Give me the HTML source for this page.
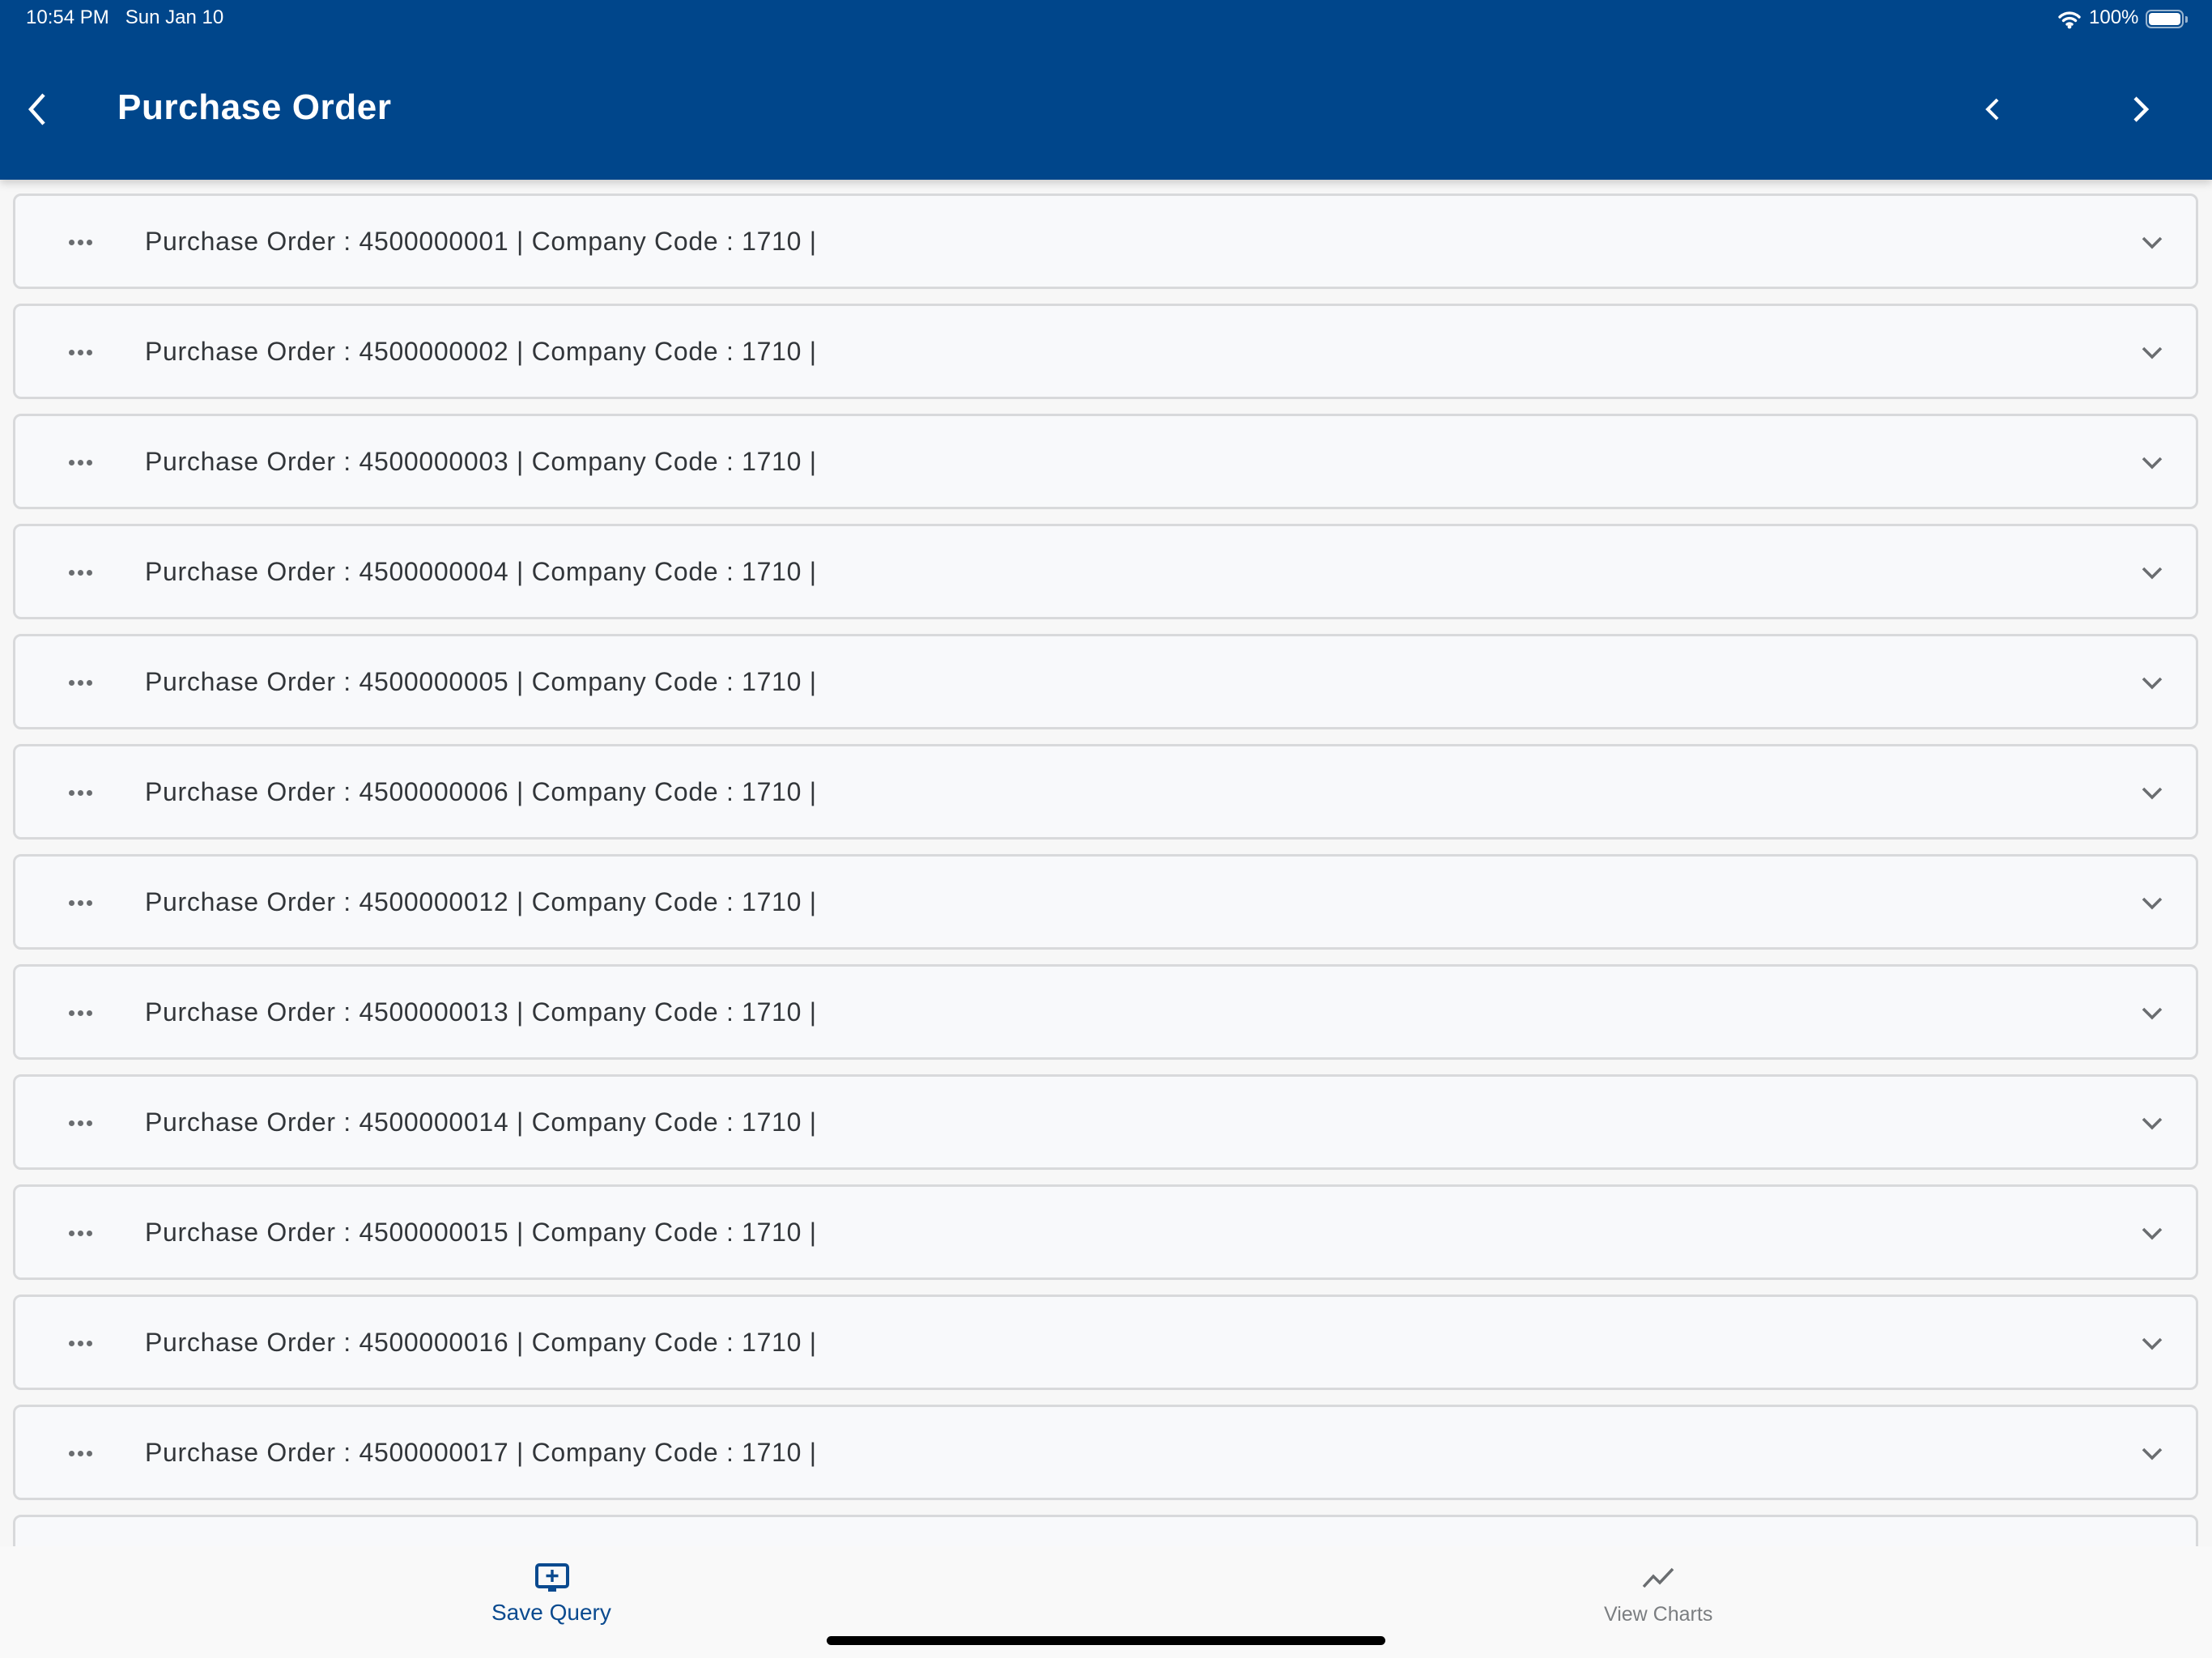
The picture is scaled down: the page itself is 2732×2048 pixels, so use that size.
<!DOCTYPE html>
<html><head><meta charset="utf-8"><style>
*{margin:0;padding:0;box-sizing:border-box}
body{width:2732px;height:2048px;background:#f7f7f7;font-family:"Liberation Sans",sans-serif;position:relative;overflow:hidden}
.hdr{position:absolute;left:0;top:0;width:2732px;height:222px;background:#00468b;box-shadow:0 4px 10px rgba(0,0,0,.18);z-index:2}
.st{position:absolute;top:8px;color:#fff;font-size:24px}
.title{position:absolute;left:145px;top:108px;color:#fff;font-size:44px;font-weight:bold;letter-spacing:0.6px}
.card{position:absolute;left:16px;width:2699px;height:118px;background:#f8f9fb;border:3px solid #d8d9db;border-radius:10px}
.card .t{position:absolute;left:160px;top:38px;font-size:32px;color:#32363a;letter-spacing:.7px}
.card .d{position:absolute;left:66px;top:48px}
.card .d i{display:inline-block;width:7px;height:7px;border-radius:50%;background:#6a6d70;margin-right:4px}
.card svg.c{position:absolute;left:2624px;top:48px}
.bot{position:absolute;left:0;top:1910px;width:2732px;height:138px;background:#f9f9f9;z-index:3}
</style></head><body>
<div class="hdr">
<div class="st" style="left:32px">10:54 PM&nbsp;&nbsp;&nbsp;Sun Jan 10</div>
<svg style="position:absolute;left:2541px;top:12px" width="30" height="24" viewBox="0 0 30 24"><path d="M3 9a17 17 0 0 1 24 0M7.5 13.5a11 11 0 0 1 15 0M12 18a5 5 0 0 1 6 0" stroke="#fff" stroke-width="3.4" fill="none" stroke-linecap="round"/><circle cx="15" cy="21" r="2.4" fill="#fff"/></svg>
<div class="st" style="left:2580px">100%</div>
<div style="position:absolute;left:2650px;top:12px;width:47px;height:23px;border:2px solid rgba(255,255,255,.6);border-radius:7px;padding:2px"><div style="width:100%;height:100%;background:#fff;border-radius:4px"></div></div>
<div style="position:absolute;left:2699px;top:20px;width:3px;height:8px;background:rgba(255,255,255,.6);border-radius:0 2px 2px 0"></div>
<svg style="position:absolute;left:30px;top:114px" width="30" height="42" viewBox="0 0 30 42"><path d="M24 3L8 21l16 18" stroke="#fff" stroke-width="4.5" fill="none"/></svg>
<div class="title">Purchase Order</div>
<svg style="position:absolute;left:2450px;top:120px" width="22" height="30" viewBox="0 0 22 30"><path d="M17 3L5 15l12 12" stroke="#fff" stroke-width="4" fill="none"/></svg>
<svg style="position:absolute;left:2632px;top:118px" width="24" height="34" viewBox="0 0 24 34"><path d="M5 3l14 14L5 31" stroke="#fff" stroke-width="4.5" fill="none"/></svg>
</div>

<div class="card" style="top:239px"><div class="d"><i></i><i></i><i></i></div><div class="t">Purchase Order : 4500000001 | Company Code : 1710 |</div><svg class="c" width="30" height="20" viewBox="0 0 30 20"><path d="M4 4l11 11L26 4" stroke="#6a6d70" stroke-width="3.6" fill="none"/></svg></div>
<div class="card" style="top:375px"><div class="d"><i></i><i></i><i></i></div><div class="t">Purchase Order : 4500000002 | Company Code : 1710 |</div><svg class="c" width="30" height="20" viewBox="0 0 30 20"><path d="M4 4l11 11L26 4" stroke="#6a6d70" stroke-width="3.6" fill="none"/></svg></div>
<div class="card" style="top:511px"><div class="d"><i></i><i></i><i></i></div><div class="t">Purchase Order : 4500000003 | Company Code : 1710 |</div><svg class="c" width="30" height="20" viewBox="0 0 30 20"><path d="M4 4l11 11L26 4" stroke="#6a6d70" stroke-width="3.6" fill="none"/></svg></div>
<div class="card" style="top:647px"><div class="d"><i></i><i></i><i></i></div><div class="t">Purchase Order : 4500000004 | Company Code : 1710 |</div><svg class="c" width="30" height="20" viewBox="0 0 30 20"><path d="M4 4l11 11L26 4" stroke="#6a6d70" stroke-width="3.6" fill="none"/></svg></div>
<div class="card" style="top:783px"><div class="d"><i></i><i></i><i></i></div><div class="t">Purchase Order : 4500000005 | Company Code : 1710 |</div><svg class="c" width="30" height="20" viewBox="0 0 30 20"><path d="M4 4l11 11L26 4" stroke="#6a6d70" stroke-width="3.6" fill="none"/></svg></div>
<div class="card" style="top:919px"><div class="d"><i></i><i></i><i></i></div><div class="t">Purchase Order : 4500000006 | Company Code : 1710 |</div><svg class="c" width="30" height="20" viewBox="0 0 30 20"><path d="M4 4l11 11L26 4" stroke="#6a6d70" stroke-width="3.6" fill="none"/></svg></div>
<div class="card" style="top:1055px"><div class="d"><i></i><i></i><i></i></div><div class="t">Purchase Order : 4500000012 | Company Code : 1710 |</div><svg class="c" width="30" height="20" viewBox="0 0 30 20"><path d="M4 4l11 11L26 4" stroke="#6a6d70" stroke-width="3.6" fill="none"/></svg></div>
<div class="card" style="top:1191px"><div class="d"><i></i><i></i><i></i></div><div class="t">Purchase Order : 4500000013 | Company Code : 1710 |</div><svg class="c" width="30" height="20" viewBox="0 0 30 20"><path d="M4 4l11 11L26 4" stroke="#6a6d70" stroke-width="3.6" fill="none"/></svg></div>
<div class="card" style="top:1327px"><div class="d"><i></i><i></i><i></i></div><div class="t">Purchase Order : 4500000014 | Company Code : 1710 |</div><svg class="c" width="30" height="20" viewBox="0 0 30 20"><path d="M4 4l11 11L26 4" stroke="#6a6d70" stroke-width="3.6" fill="none"/></svg></div>
<div class="card" style="top:1463px"><div class="d"><i></i><i></i><i></i></div><div class="t">Purchase Order : 4500000015 | Company Code : 1710 |</div><svg class="c" width="30" height="20" viewBox="0 0 30 20"><path d="M4 4l11 11L26 4" stroke="#6a6d70" stroke-width="3.6" fill="none"/></svg></div>
<div class="card" style="top:1599px"><div class="d"><i></i><i></i><i></i></div><div class="t">Purchase Order : 4500000016 | Company Code : 1710 |</div><svg class="c" width="30" height="20" viewBox="0 0 30 20"><path d="M4 4l11 11L26 4" stroke="#6a6d70" stroke-width="3.6" fill="none"/></svg></div>
<div class="card" style="top:1735px"><div class="d"><i></i><i></i><i></i></div><div class="t">Purchase Order : 4500000017 | Company Code : 1710 |</div><svg class="c" width="30" height="20" viewBox="0 0 30 20"><path d="M4 4l11 11L26 4" stroke="#6a6d70" stroke-width="3.6" fill="none"/></svg></div>
<div class="card" style="top:1871px"></div>

<div class="bot">
<svg style="position:absolute;left:660px;top:20px" width="44" height="40" viewBox="0 0 44 40"><rect x="3" y="3" width="38" height="27" rx="3" stroke="#0a4a8f" stroke-width="4" fill="none"/><path d="M22 9v15M14.5 16.5h15" stroke="#0a4a8f" stroke-width="3.4"/><path d="M17 30h10v6H17z" fill="#0a4a8f"/></svg>
<div style="position:absolute;left:607px;top:66px;font-size:28px;color:#0a4a8f">Save Query</div>
<svg style="position:absolute;left:2028px;top:24px" width="40" height="30" viewBox="0 0 40 30"><path d="M2 26l12-13 8 8L38 4" stroke="#6a6d70" stroke-width="3.5" fill="none"/></svg>
<div style="position:absolute;left:1981px;top:70px;font-size:25px;color:#7b7e81">View Charts</div>
<div style="position:absolute;left:1021px;top:111px;width:690px;height:11px;background:#000;border-radius:6px"></div>
</div>
</body></html>
